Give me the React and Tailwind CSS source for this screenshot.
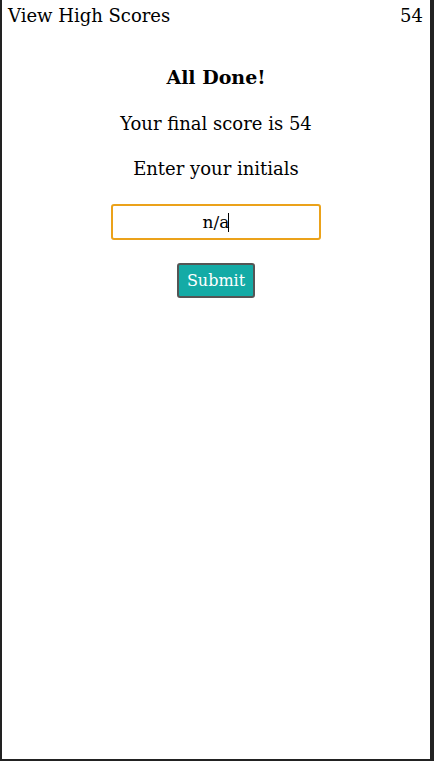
export default function App() {
  return (
    <div className="h-[761px] box-border border-l-2 border-r-4 border-b-2 border-[#222] bg-white text-black" style={{ fontFamily: '"DejaVu Serif", serif' }}>
      <div className="flex justify-between pl-[6px] pr-[7px] pt-[4px] text-[18px] leading-[24px]">
        <span>View High Scores</span>
        <span>54</span>
      </div>
      <div className="flex flex-col items-center">
        <h1 className="mt-[35px] text-[19px] font-bold leading-[28px]">All Done!</h1>
        <p className="mt-[20px] text-[18px] leading-[26px]">Your final score is 54</p>
        <p className="mt-[19px] text-[18px] leading-[26px]">Enter your initials</p>
        <div className="relative mt-[22px]">
          <input
            defaultValue="n/a"
            className="block w-[210px] h-[36px] box-border rounded-[3px] border-2 border-[#eba21a] text-center text-[17px] text-black outline-none"
            style={{ fontFamily: '"DejaVu Serif", serif' }}
          />
          <span className="absolute left-[117px] top-[9px] h-[19px] w-px bg-black" />
        </div>
        <button className="mt-[23px] w-[78px] h-[35px] box-border rounded-[3px] border-2 border-[#555] bg-[#14aba6] text-white text-[16px]" style={{ fontFamily: '"DejaVu Serif", serif' }}>
          Submit
        </button>
      </div>
    </div>
  );
}
